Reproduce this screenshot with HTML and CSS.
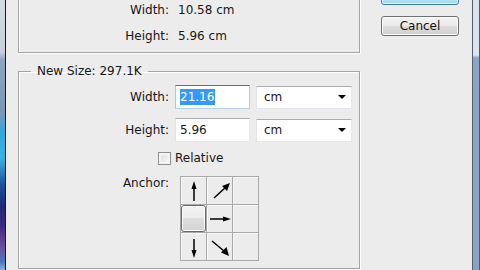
FILE: index.html
```html
<!DOCTYPE html>
<html lang="en">
<head>
    <meta charset="UTF-8">
    <meta name="viewport" content="width=device-width, initial-scale=1.0">
    <title>Image Size</title>
    <link rel="stylesheet" href="styles.css">
</head>
<body>
    <div class="screen">
        <div class="desktop"></div>
        <div class="dialog">
            <div class="groups">
                <fieldset class="group current">
                    <div class="row"><span class="label">Width:</span><span>10.58 cm</span></div>
                    <div class="row"><span class="label">Height:</span><span>5.96 cm</span></div>
                </fieldset>

                <fieldset class="group new-size">
                    <legend>New Size: 297.1K</legend>
                    <div class="field">
                        <span class="label">Width:</span>
                        <div class="input focused"><span class="selected">21.16</span></div>
                        <div class="select"><span>cm</span><span class="caret"></span></div>
                    </div>
                    <div class="field second">
                        <span class="label">Height:</span>
                        <div class="input">5.96</div>
                        <div class="select"><span>cm</span><span class="caret"></span></div>
                    </div>
                    <div class="check-row">
                        <span class="checkbox"></span>
                        <span>Relative</span>
                    </div>
                    <div class="anchor-row">
                        <span class="label">Anchor:</span>
                        <div class="anchor">
                            <div class="cell">
                                <svg width="26" height="27" viewBox="0 0 26 27">
                                    <line x1="13" y1="11" x2="13" y2="24" stroke="#000" stroke-width="1.5"/>
                                    <polygon points="13,4 10.5,12 15.5,12" fill="#000"/>
                                </svg>
                            </div>
                            <div class="cell">
                                <svg width="26" height="27" viewBox="0 0 26 27">
                                    <line x1="7" y1="21" x2="19" y2="10" stroke="#000" stroke-width="1.5"/>
                                    <polygon points="23,6 15,9 20,14" fill="#000"/>
                                </svg>
                            </div>
                            <div class="cell"></div>
                            <div class="cell">
                                <span class="anchor-pick"></span>
                            </div>
                            <div class="cell">
                                <svg width="26" height="27" viewBox="0 0 26 27">
                                    <line x1="3" y1="14" x2="18" y2="14" stroke="#000" stroke-width="1.5"/>
                                    <polygon points="24,14 16,11.5 16,16.5" fill="#000"/>
                                </svg>
                            </div>
                            <div class="cell"></div>
                            <div class="cell">
                                <svg width="26" height="27" viewBox="0 0 26 27">
                                    <line x1="13" y1="6" x2="13" y2="18" stroke="#000" stroke-width="1.5"/>
                                    <polygon points="13,25 10.5,17 15.5,17" fill="#000"/>
                                </svg>
                            </div>
                            <div class="cell">
                                <svg width="26" height="27" viewBox="0 0 26 27">
                                    <line x1="5" y1="8" x2="17" y2="18" stroke="#000" stroke-width="1.5"/>
                                    <polygon points="22,23 19.5,14 14,19.5" fill="#000"/>
                                </svg>
                            </div>
                            <div class="cell"></div>
                        </div>
                    </div>
                </fieldset>
            </div>

            <div class="buttons">
                <button class="btn default">OK</button>
                <button class="btn">Cancel</button>
            </div>
        </div>
        <div class="frame"></div>
    </div>
</body>
</html>
```

FILE: styles.css
```css
* {
    box-sizing: border-box;
}

body {
    margin: 0;
    width: 480px;
    height: 270px;
    overflow: hidden;
    font-family: "DejaVu Sans", sans-serif;
    font-size: 12px;
    color: #161616;
    background-color: #ececec;
}

.screen {
    display: flex;
    height: 270px;
}

/* bit of the desktop showing on the left */
.desktop {
    width: 6px;
    border-right: 1px solid #141a2c;
    background: linear-gradient(to bottom, #d3dce6 0, #c4d0dd 52px, #8fa4c0 60px, #7c96b8 112px, #2ea8df 134px, #38b4e2 158px, #1d53a0 184px, #1c2877 206px, #3b2a82 226px, #6b4b98 246px, #4b7abb 262px, #8ab2da 270px);
}

.dialog {
    flex: 1;
    display: flex;
    padding-left: 12px;
    background-color: #ececec;
    border-right: 1px solid #565e6c;
}

.frame {
    width: 7px;
    border-right: 1px solid #4b5b73;
    background: linear-gradient(to bottom, #dce4ed 0, #dce4ed 55px, #8ca5c4 58px, #8aa3c2 270px);
}

.groups {
    width: 342px;
}

.group {
    margin: 0;
    min-width: 0;
    border: 1px solid #a3a3a3;
    box-shadow: 1px 1px 0 #fff, inset 1px 1px 0 #fff;
}

.label {
    text-align: right;
}

/* current size, top cut off */
.current {
    margin-top: -24px;
    padding: 20px 0 3px;
}

.row {
    display: grid;
    grid-template-columns: 150px auto;
    column-gap: 9px;
    align-items: center;
    height: 26px;
}

.new-size {
    margin-top: 11px;
    padding: 7px 0 7px;
}

.new-size legend {
    margin-left: 12px;
    padding: 0 6px;
    line-height: 14px;
}

.field {
    display: grid;
    grid-template-columns: 150px 75px 96px;
    column-gap: 6px;
    align-items: center;
    height: 24px;
}

.field.second {
    margin-top: 9px;
}

.input {
    height: 24px;
    padding: 3px 0 0 4px;
    background-color: #fff;
    border: 1px solid #e3e9ef;
    border-top-color: #abadb3;
    border-left-color: #e2e3ea;
    line-height: 16px;
}

.input.focused {
    border-color: #b5cfe7;
    border-top-color: #3d7bad;
    border-left-color: #a4c9e3;
}

.selected {
    display: inline-block;
    background-color: #3399ff;
    color: #fff;
    padding-right: 1px;
}

.select {
    display: flex;
    align-items: center;
    justify-content: space-between;
    height: 23px;
    padding: 0 5px 0 7px;
    background-color: #fff;
    border: 1px solid #e3e9ef;
    border-top-color: #abadb3;
    border-left-color: #e2e3ea;
}

.caret {
    width: 0;
    height: 0;
    border-left: 4px solid transparent;
    border-right: 4px solid transparent;
    border-top: 4px solid #000;
}

.check-row {
    display: flex;
    align-items: center;
    gap: 4px;
    margin-top: 9px;
    padding-left: 139px;
    line-height: 15px;
}

.checkbox {
    width: 13px;
    height: 13px;
    border: 1px solid #8e8f8f;
    background: linear-gradient(135deg, #dcdcdc, #fbfbfb);
    box-shadow: inset 0 0 0 2px #f4f4f4;
}

.anchor-row {
    display: grid;
    grid-template-columns: 150px auto;
    column-gap: 11px;
    align-items: start;
    margin-top: 10px;
    line-height: 15px;
}

.anchor {
    display: grid;
    grid-template-columns: repeat(3, 26px);
    grid-template-rows: repeat(3, 28px);
    width: 79px;
    border-top: 1px solid #a8a8a8;
    border-left: 1px solid #a8a8a8;
}

.cell {
    position: relative;
    border-right: 1px solid #a8a8a8;
    border-bottom: 1px solid #a8a8a8;
    box-shadow: inset 1px 1px 0 #fafafa;
}

.cell svg {
    display: block;
}

.anchor-pick {
    position: absolute;
    left: 0;
    top: 0;
    width: 25px;
    height: 27px;
    border: 1px solid #6a6a6a;
    border-radius: 3px;
    background: linear-gradient(to bottom, #f3f3f3 0, #ebebeb 50%, #dedede 50%, #d4d4d4 100%);
    box-shadow: inset 0 0 0 1px #fbfbfb;
}

.buttons {
    display: flex;
    flex-direction: column;
    margin-left: 21px;
    width: 78px;
}

.btn {
    height: 20px;
    padding: 0;
    font-family: "DejaVu Sans", sans-serif;
    font-size: 12px;
    color: #111;
    border: 1px solid #707070;
    border-radius: 3px;
    background: linear-gradient(to bottom, #f2f2f2 0, #ebebeb 50%, #dddddd 50%, #cfcfcf 100%);
    box-shadow: inset 0 0 0 1px #fbfbfb;
}

.btn.default {
    height: 21px;
    margin-top: -16px;
    border-color: #3c7fb1;
    background: linear-gradient(to bottom, #eaf6fd 0, #d9f0fc 50%, #bee6fd 50%, #a7d9f5 100%);
    box-shadow: inset 0 0 0 1px #e8f6fd;
}

.btn + .btn {
    margin-top: 11px;
}
```
